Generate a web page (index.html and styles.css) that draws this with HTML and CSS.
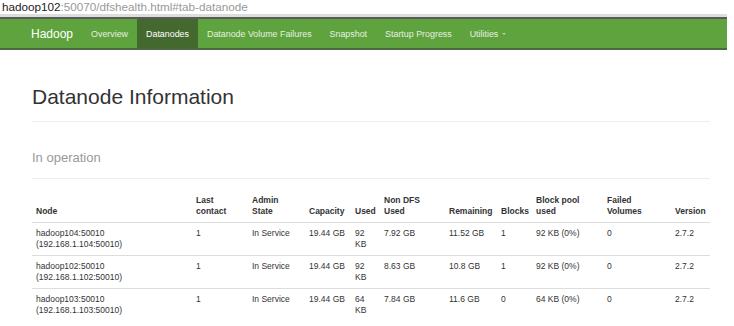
FILE: index.html
```html
<!DOCTYPE html>
<html lang="en">
<head>
    <meta charset="UTF-8">
    <title>Namenode information</title>
    <link rel="stylesheet" href="styles.css">
</head>
<body>

<div class="page">
    <div class="urlbar"><span class="host">hadoop102</span>:50070/dfshealth.html#tab-datanode</div>

    <nav class="navbar">
        <span class="brand">Hadoop</span>
        <a href="#tab-overview">Overview</a>
        <a href="#tab-datanode" class="active">Datanodes</a>
        <a href="#tab-datanode-volume-failures">Datanode Volume Failures</a>
        <a href="#tab-snapshot">Snapshot</a>
        <a href="#tab-startup-progress">Startup Progress</a>
        <a href="#" class="dropdown">Utilities <span class="caret"></span></a>
    </nav>

    <div class="content">
        <div class="page-header">
            <h1>Datanode Information</h1>
        </div>
        <div class="page-header small-header">
            <h2>In operation</h2>
        </div>

        <table class="datanodes">
            <colgroup>
                <col class="c-node">
                <col class="c-contact">
                <col class="c-state">
                <col class="c-capacity">
                <col class="c-used">
                <col class="c-nondfs">
                <col class="c-remaining">
                <col class="c-blocks">
                <col class="c-pool">
                <col class="c-failed">
                <col class="c-version">
            </colgroup>
            <thead>
                <tr>
                    <th>Node</th>
                    <th>Last<br>contact</th>
                    <th>Admin<br>State</th>
                    <th>Capacity</th>
                    <th>Used</th>
                    <th>Non DFS<br>Used</th>
                    <th>Remaining</th>
                    <th>Blocks</th>
                    <th>Block pool<br>used</th>
                    <th>Failed<br>Volumes</th>
                    <th>Version</th>
                </tr>
            </thead>
            <tbody>
                <tr>
                    <td>hadoop104:50010<br>(192.168.1.104:50010)</td>
                    <td>1</td>
                    <td>In Service</td>
                    <td>19.44 GB</td>
                    <td>92<br>KB</td>
                    <td>7.92 GB</td>
                    <td>11.52 GB</td>
                    <td>1</td>
                    <td>92 KB (0%)</td>
                    <td>0</td>
                    <td>2.7.2</td>
                </tr>
                <tr>
                    <td>hadoop102:50010<br>(192.168.1.102:50010)</td>
                    <td>1</td>
                    <td>In Service</td>
                    <td>19.44 GB</td>
                    <td>92<br>KB</td>
                    <td>8.63 GB</td>
                    <td>10.8 GB</td>
                    <td>1</td>
                    <td>92 KB (0%)</td>
                    <td>0</td>
                    <td>2.7.2</td>
                </tr>
                <tr>
                    <td>hadoop103:50010<br>(192.168.1.103:50010)</td>
                    <td>1</td>
                    <td>In Service</td>
                    <td>19.44 GB</td>
                    <td>64<br>KB</td>
                    <td>7.84 GB</td>
                    <td>11.6 GB</td>
                    <td>0</td>
                    <td>64 KB (0%)</td>
                    <td>0</td>
                    <td>2.7.2</td>
                </tr>
            </tbody>
        </table>
    </div>
</div>

</body>
</html>
```

FILE: styles.css
```css
body {
    font-family: "Liberation Sans", Arial, sans-serif;
    background-color: #fff;
    margin: 0;
    color: #333;
}
.page {
    width: 727px;
}
.urlbar {
    height: 14px;
    padding-left: 2px;
    font-size: 11.7px;
    line-height: 13px;
    color: #999;
    border-bottom: 3px solid #dddddd;
    white-space: nowrap;
}
.urlbar .host {
    color: #222;
}
.navbar {
    display: flex;
    align-items: stretch;
    height: 29px;
    padding-left: 22px;
    background-color: #5fa33e;
    border-top: 2px solid #5b5b5b;
    border-bottom: 2px solid #4c6840;
    font-size: 8.9px;
}
.navbar .brand,
.navbar a {
    display: flex;
    align-items: center;
    padding: 0 9px;
    color: #e6efe0;
    text-decoration: none;
    white-space: nowrap;
}
.navbar .brand {
    font-size: 12px;
    color: #fff;
}
.navbar a.active {
    background-color: #44692f;
    color: #fff;
}
.caret {
    display: inline-block;
    width: 0;
    height: 0;
    margin-left: 4px;
    border-top: 2px solid #b5d4a5;
    border-left: 2px solid transparent;
    border-right: 2px solid transparent;
}
.content {
    padding: 0 17px 0 32px;
}
.page-header {
    border-bottom: 1px solid #eee;
    padding-bottom: 13px;
}
h1 {
    margin: 35px 0 0;
    font-size: 21px;
    font-weight: normal;
    line-height: 23px;
    color: #333;
}
.small-header {
    padding-bottom: 12px;
}
h2 {
    margin: 28px 0 0;
    font-size: 13px;
    font-weight: normal;
    line-height: 16px;
    color: #999;
}
.datanodes {
    width: 678px;
    margin-top: 11px;
    border-collapse: collapse;
    table-layout: fixed;
    font-size: 8.5px;
    line-height: 11px;
    color: #333;
}
.datanodes th,
.datanodes td {
    padding: 5px 4px;
    text-align: left;
    vertical-align: top;
}
.datanodes th {
    vertical-align: bottom;
    font-weight: bold;
    white-space: nowrap;
    border-bottom: 1px solid #ddd;
}
.datanodes td {
    border-bottom: 1px solid #ddd;
}
.datanodes tbody tr:last-child td {
    border-bottom: none;
}
.c-node { width: 160px; }
.c-contact { width: 56px; }
.c-state { width: 57px; }
.c-capacity { width: 46px; }
.c-used { width: 29px; }
.c-nondfs { width: 65px; }
.c-remaining { width: 52px; }
.c-blocks { width: 35px; }
.c-pool { width: 71px; }
.c-failed { width: 68px; }
.c-version { width: 39px; }
```
